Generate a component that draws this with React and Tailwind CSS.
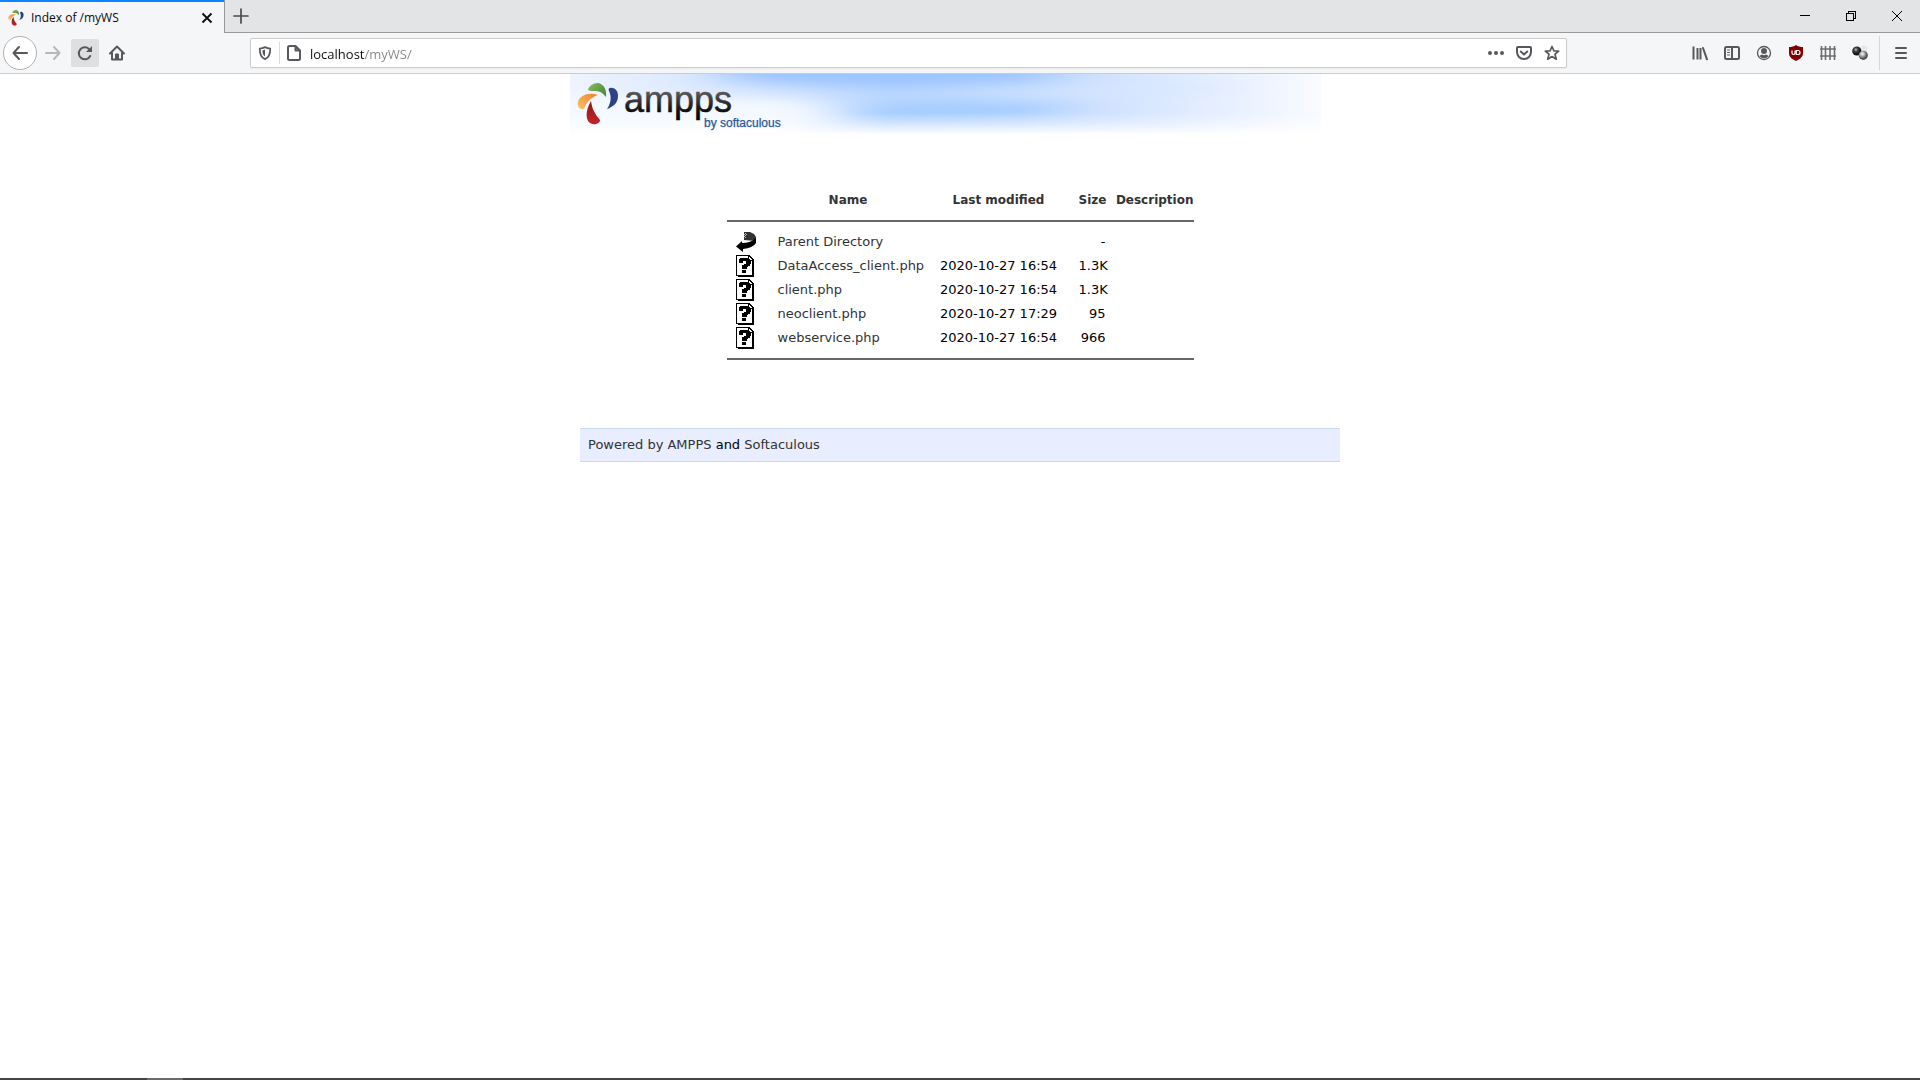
import React from "react";

const files = [
  { name: "DataAccess_client.php", modified: "2020-10-27 16:54", size: "1.3K" },
  { name: "client.php", modified: "2020-10-27 16:54", size: "1.3K" },
  { name: "neoclient.php", modified: "2020-10-27 17:29", size: "95" },
  { name: "webservice.php", modified: "2020-10-27 16:54", size: "966" },
];

function Pinwheel({ className, id }) {
  return (
    <svg className={className} viewBox="0 0 42 42" aria-hidden="true">
      <defs>
        <linearGradient id={id + "g"} x1="0" y1="0" x2="1" y2="0.6">
          <stop offset="0" stopColor="#8dbb62" />
          <stop offset="1" stopColor="#4f8d3a" />
        </linearGradient>
        <linearGradient id={id + "o"} x1="0" y1="1" x2="1" y2="0">
          <stop offset="0" stopColor="#fbc56c" />
          <stop offset="1" stopColor="#ee7f2b" />
        </linearGradient>
        <linearGradient id={id + "r"} x1="0" y1="0" x2="0" y2="1">
          <stop offset="0" stopColor="#8f1519" />
          <stop offset="1" stopColor="#c4262b" />
        </linearGradient>
      </defs>
      <path d="M11 7C12 3 16 0 21 0C27 1 30 7 29 14C26 10 23 8 19 8C15 8 12 8 11 7Z" fill={`url(#${id}g)`} />
      <path d="M21 12C15 14 10 18 7 26C3 27 0 24 1 19C3 12 12 9 21 12Z" fill={`url(#${id}o)`} />
      <path d="M14 18C15 26 18 31 23 37C23 40 19 42 15 41C8 39 8 28 14 18Z" fill={`url(#${id}r)`} />
      <path d="M33 5C38 4 41 8 41 13C41 20 36 24 30 26C35 19 34 12 32 8C31 6 32 5 33 5Z" fill="#2c4285" />
    </svg>
  );
}

function Logo() {
  return (
    <svg className="block" width="220" height="60" viewBox="0 0 220 60" role="img" aria-label="ampps by softaculous">
      <defs>
        <linearGradient id="word" gradientUnits="userSpaceOnUse" x1="0" y1="18" x2="0" y2="44">
          <stop offset="0" stopColor="#5a5a5a" />
          <stop offset="0.7" stopColor="#111" />
          <stop offset="1" stopColor="#000" />
        </linearGradient>
      </defs>
      <svg x="7" y="9" width="42" height="42">
        <Pinwheel id="logo" />
      </svg>
      <text x="54" y="38" fontSize="36" fontFamily="'Liberation Sans', Arial, sans-serif" fill="url(#word)" stroke="url(#word)" strokeWidth="0.5">ampps</text>
      <text x="134" y="53" fontSize="12" fontFamily="'Liberation Sans', Arial, sans-serif" fill="#2b5797" stroke="#2b5797" strokeWidth="0.25">by softaculous</text>
    </svg>
  );
}

function Sky() {
  return (
    <svg className="col-start-1 row-start-1 h-[60px] w-full" viewBox="0 0 751 60" preserveAspectRatio="none" aria-hidden="true">
      <defs>
        <linearGradient id="base">
          <stop offset="0" stopColor="#eef3ff" />
          <stop offset="0.2" stopColor="#d9e7ff" />
          <stop offset="0.42" stopColor="#bdd8ff" />
          <stop offset="0.6" stopColor="#c1daff" />
          <stop offset="0.75" stopColor="#d6e5ff" />
          <stop offset="0.9" stopColor="#ebf2ff" />
          <stop offset="1" stopColor="#f9fbff" />
        </linearGradient>
        <linearGradient id="fade" x1="0" y1="0" x2="0" y2="1">
          <stop offset="0.65" stopColor="#fff" stopOpacity="0" />
          <stop offset="0.82" stopColor="#fff" stopOpacity="0.35" />
          <stop offset="1" stopColor="#fff" stopOpacity="0.95" />
        </linearGradient>
        <filter id="soft" filterUnits="userSpaceOnUse" x="-150" y="-60" width="1100" height="200">
          <feGaussianBlur stdDeviation="30 6" />
        </filter>
      </defs>
      <rect width="751" height="60" fill="url(#base)" />
      <g filter="url(#soft)">
        <path d="M140 -20H480V6L330 14L160 8Z" fill="#9dc5ff" />
        <path d="M-100 20L120 24L220 24L270 34L250 60L180 80H-100Z" fill="#f4f9ff" />
        <path d="M270 32L380 26L500 28L460 43L290 48Z" fill="#a5cdff" />
        <path d="M380 22L650 10V16L460 25Z" fill="#d6e7ff" />
      </g>
      <rect width="751" height="60" fill="url(#fade)" />
    </svg>
  );
}

function UnknownIcon() {
  return (
    <svg className="block" width="18" height="22" viewBox="0 0 18 22" shapeRendering="crispEdges" role="img" aria-label="[   ]">
      <path d="M0 0H13L18 5V22H2V21H0Z" fill="#000" />
      <path d="M1 1H12V6H16V20H1Z" fill="#fff" />
      <path d="M13 2H14V3H15V4H16V5H13Z" fill="#fff" />
      <path d="M4 3H12V4H14V6H15V9H14V11H12V12H11V14H6V10H8V9H10V6H7V8H3V4H4ZM6 15H10V18H6Z" fill="#000" />
    </svg>
  );
}

function BackIcon() {
  return (
    <svg className="block" width="20" height="20" viewBox="0 0 20 20" role="img" aria-label="[PARENTDIR]">
      <path d="M8 0H14L18 2L20 5V9L14 8.500L8 8Z" fill="#333" />
      <path d="M20 6V11Q17 16 7 17V20L0 14.500L6 9V11Q15 11 20 6Z" fill="#000" />
      <path d="M9 1h1v1h-1zM9 3h1v1h-1zM8 2h1v1h-1zM8 4h1v1h-1zM10 2h1v1h-1zM9 5h1v1h-1z" fill="#bbb" />
    </svg>
  );
}

function Icon({ children, size = "size-4", width = 2 }) {
  return (
    <svg className={size} viewBox="0 0 16 16" fill="none" stroke="currentColor" strokeWidth={width} strokeLinecap="round" strokeLinejoin="round" aria-hidden="true">
      {children}
    </svg>
  );
}

function ToolButton({ label, children, className = "" }) {
  return (
    <button aria-label={label} className={"flex size-7 items-center justify-center rounded-xs " + className}>
      {children}
    </button>
  );
}

function TabStrip() {
  return (
    <div className="flex h-[33px] bg-[#e3e4e6]">
      <div className="flex w-[224px] items-center border-t-2 border-[#0a84ff] bg-[#f5f6f7] pr-[5px] pl-2">
        <Pinwheel id="tab" className="size-4 shrink-0" />
        <span className="ml-[7px] flex-1 text-[12px] text-[#0c0c0d]">Index of /myWS</span>
        <button aria-label="Close tab" className="flex size-6 items-center justify-center text-[#0c0c0d]">
          <Icon>
            <path d="M3.500 3.500L12.500 12.500M12.500 3.500L3.500 12.500" strokeLinecap="butt" strokeWidth="1.800" />
          </Icon>
        </button>
      </div>
      <div className="flex flex-1 items-center justify-between border-b border-l border-[#98999b]">
        <button aria-label="New tab" className="flex size-8 items-center justify-center text-[#4a4a4f]">
          <Icon>
            <path d="M8 1V15M1 8H15" strokeWidth="1.700" />
          </Icon>
        </button>
        <div className="flex self-stretch text-black">
          <button aria-label="Minimize" className="flex w-[46px] items-center justify-center">
            <svg width="10" height="10" shapeRendering="crispEdges"><path d="M0 4.500H10" stroke="currentColor" /></svg>
          </button>
          <button aria-label="Restore" className="flex w-[46px] items-center justify-center">
            <svg width="10" height="10" fill="none" stroke="currentColor" shapeRendering="crispEdges"><path d="M0.500 2.500H7.500V9.500H0.500ZM2.500 2V0.500H9.500V7.500H8" /></svg>
          </button>
          <button aria-label="Close" className="flex w-[46px] items-center justify-center">
            <svg width="10" height="10" stroke="currentColor"><path d="M0 0L10 10M10 0L0 10" /></svg>
          </button>
        </div>
      </div>
    </div>
  );
}

function Toolbar() {
  return (
    <div className="flex h-[41px] items-center border-b border-[#ccc] bg-[#f5f6f7] text-[#58585c]">
      <div className="flex w-[250px] shrink-0 items-center pl-[3px]">
        <button aria-label="Back" className="flex size-[34px] items-center justify-center rounded-full border border-[#b1b1b3] bg-white">
          <Icon><path d="M15 8H1.500M7 2L1.500 8L7 14" /></Icon>
        </button>
        <ToolButton label="Forward" className="ml-[2px] text-[#b8b8ba]">
          <Icon><path d="M1 8H14.500M9 2L14.500 8L9 14" /></Icon>
        </ToolButton>
        <ToolButton label="Reload" className="ml-1 bg-[#dedfe0]">
          <Icon>
            <path d="M13.200 11A6 6 0 1 1 12 4" />
            <path d="M15 1V7H9Z" fill="currentColor" stroke="none" />
          </Icon>
        </ToolButton>
        <ToolButton label="Home" className="ml-1">
          <Icon>
            <path d="M1 8.500L8 1.500L15 8.500M3 8V14.500H13V8" />
            <path d="M6.500 14V9H9.500V14Z" fill="currentColor" strokeWidth="1" />
          </Icon>
        </ToolButton>
      </div>
      <div className="flex h-[30px] flex-1 items-center rounded-xs border border-[#ccc] bg-white shadow-xs">
        <button aria-label="Tracking protection" className="flex w-7 items-center justify-center">
          <Icon size="size-[14px]">
            <path d="M8 1.300C6 2.300 4 2.800 2 3C2 9 3 13 8 15C13 13 14 9 14 3C12 2.800 10 2.300 8 1.300Z" />
            <path d="M8 4V12C6 10.500 5 8.500 5 5Z" fill="currentColor" stroke="none" />
          </Icon>
        </button>
        <span className="h-[22px] w-px bg-[#dcdcdc]" />
        <button aria-label="Site information" className="flex w-7 items-center justify-center">
          <Icon>
            <path d="M3.500 1H9.500L14 5.500V13.500Q14 15 12.500 15H3.500Q2 15 2 13.500V2.500Q2 1 3.500 1ZM9.500 1.500V5.500H13.500" />
          </Icon>
        </button>
        <input
          aria-label="Address"
          defaultValue="localhost/myWS/"
          className="ml-[2px] h-full min-w-0 flex-1 bg-[linear-gradient(90deg,#0c0c0d_55px,#858588_55px)] bg-clip-text pt-px text-[13px] text-transparent outline-none"
        />
        <ToolButton label="Page actions">
          <svg className="size-4" viewBox="0 0 16 16" fill="currentColor">
            <circle cx="2" cy="8" r="2" /><circle cx="8" cy="8" r="2" /><circle cx="14" cy="8" r="2" />
          </svg>
        </ToolButton>
        <ToolButton label="Save to Pocket">
          <Icon>
            <path d="M2 2H14Q15 2 15 3V7C15 11 12 14 8 14C4 14 1 11 1 7V3Q1 2 2 2ZM4.800 6.500L8 9.500L11.200 6.500" />
          </Icon>
        </ToolButton>
        <ToolButton label="Bookmark this page">
          <Icon>
            <path d="M8 1.500L10 6H14.700L11 9.200L12.300 14.200L8 11.500L3.700 14.200L5 9.200L1.300 6H6Z" strokeWidth="1.700" />
          </Icon>
        </ToolButton>
      </div>
      <div className="flex w-[353px] shrink-0 items-center justify-end gap-1">
        <ToolButton label="Library">
          <Icon><path d="M1.500 1.500V14.500M5.500 3V14.500M8.500 3V14.500" strokeLinecap="butt" /><path d="M11 3L15 14.300" /></Icon>
        </ToolButton>
        <ToolButton label="Sidebars">
          <Icon><path d="M2.500 2H13.500Q15 2 15 3.500V12.500Q15 14 13.500 14H2.500Q1 14 1 12.500V3.500Q1 2 2.500 2ZM8 2V14" /><path d="M3.500 5H5.500M3.500 7.500H5.500M3.500 10H5.500" strokeWidth="1" /></Icon>
        </ToolButton>
        <ToolButton label="Account">
          <svg className="size-4" viewBox="0 0 16 16">
            <circle cx="8" cy="8" r="6.500" fill="none" stroke="currentColor" strokeWidth="1.300" />
            <circle cx="8" cy="6" r="3" fill="currentColor" />
            <path d="M3.500 11Q5 9.500 6 9.500Q8 11 10 9.500Q11 9.500 12.500 11Q11 13.300 8 13.300Q5 13.300 3.500 11Z" fill="currentColor" />
          </svg>
        </ToolButton>
        <ToolButton label="uBlock Origin">
          <svg className="size-4" viewBox="0 0 16 16">
            <path d="M8 0C6 1.500 4 2 1 2V8C1 12 4 14 8 16C12 14 15 12 15 8V2C12 2 10 1.500 8 0Z" fill="#800000" />
            <path d="M4 5.500V8Q4 9.500 5.500 9.500Q7 9.500 7 8V5.500M8.300 5.500V9.500H10A2 2 0 0 0 10 5.500Z" fill="none" stroke="#fff" strokeWidth="1.200" />
          </svg>
        </ToolButton>
        <ToolButton label="Fence extension">
          <svg className="size-4" viewBox="0 0 16 16" fill="none" stroke="#6e6e6e" strokeWidth="1.600">
            <path d="M1.500 1V15M5.500 1V15M10 1V15M14.500 1V15M0 4H16M0 11H16" />
          </svg>
        </ToolButton>
        <ToolButton label="Spheres extension">
          <svg className="size-4" viewBox="0 0 16 16">
            <defs>
              <radialGradient id="dark" cx="0.4" cy="0.35"><stop offset="0" stopColor="#ccc" /><stop offset="0.4" stopColor="#444" /><stop offset="1" stopColor="#111" /></radialGradient>
              <radialGradient id="light" cx="0.4" cy="0.35"><stop offset="0" stopColor="#fff" /><stop offset="0.5" stopColor="#aaa" /><stop offset="1" stopColor="#555" /></radialGradient>
            </defs>
            <circle cx="12" cy="4" r="3.500" fill="#e8e8ea" />
            <circle cx="4.800" cy="6" r="4.600" fill="url(#dark)" />
            <circle cx="11.300" cy="10.300" r="4.600" fill="url(#light)" />
          </svg>
        </ToolButton>
        <span className="ml-px h-[34px] w-px bg-[#d7d7db]" />
        <ToolButton label="Menu" className="mr-[5px] ml-[3px]">
          <Icon><path d="M3 3H13M3 8H13M3 13H13" /></Icon>
        </ToolButton>
      </div>
    </div>
  );
}

function Link({ children }) {
  return <a href="#" className="text-[#333]">{children}</a>;
}

function Rule() {
  return (
    <tr>
      <td colSpan={5} className="py-2"><hr className="border-t-2 border-[#666]" /></td>
    </tr>
  );
}

function Listing() {
  return (
    <table className="mx-auto mt-[53px] w-[467px] table-fixed">
      <colgroup>
        <col className="w-[51px]" />
        <col className="w-[141px]" />
        <col className="w-[160px]" />
        <col className="w-[27px]" />
        <col />
      </colgroup>
      <thead>
        <tr className="h-[25px] text-[12px] text-[#333]">
          <th />
          <th><Link>Name</Link></th>
          <th><Link>Last modified</Link></th>
          <th className="text-right"><Link>Size</Link></th>
          <th className="text-right"><Link>Description</Link></th>
        </tr>
      </thead>
      <tbody>
        <Rule />
        <tr className="h-6">
          <td className="pl-[9px]"><BackIcon /></td>
          <td><Link>Parent Directory</Link></td>
          <td />
          <td className="text-right">-</td>
          <td />
        </tr>
        {files.map((file) => (
          <tr key={file.name} className="h-6">
            <td className="pl-[9px]"><UnknownIcon /></td>
            <td><Link>{file.name}</Link></td>
            <td className="text-center">{file.modified}</td>
            <td className="text-right">{file.size}</td>
            <td />
          </tr>
        ))}
        <Rule />
      </tbody>
    </table>
  );
}

export default function App() {
  return (
    <div className="flex min-h-screen flex-col bg-white">
      <header className="font-['Open_Sans','Noto_Sans',sans-serif]">
        <TabStrip />
        <Toolbar />
      </header>
      <main className="mx-auto w-full max-w-[780px] flex-1 font-['DejaVu_Sans',Verdana,sans-serif] text-[13px] leading-4 text-black">
        <div className="grid max-w-[751px]">
          <Sky />
          <div className="col-start-1 row-start-1"><Logo /></div>
        </div>
        <Listing />
        <footer className="mx-[10px] mt-[60px] border-y border-[#c9dbe8] bg-[#e8eeff] px-2 py-2">
          <Link>Powered by AMPPS</Link> and <Link>Softaculous</Link>
        </footer>
      </main>
      <div className="flex h-[2px] bg-[#444]">
        <span className="ml-[147px] w-9 bg-[#6b6b6b]" />
      </div>
    </div>
  );
}
